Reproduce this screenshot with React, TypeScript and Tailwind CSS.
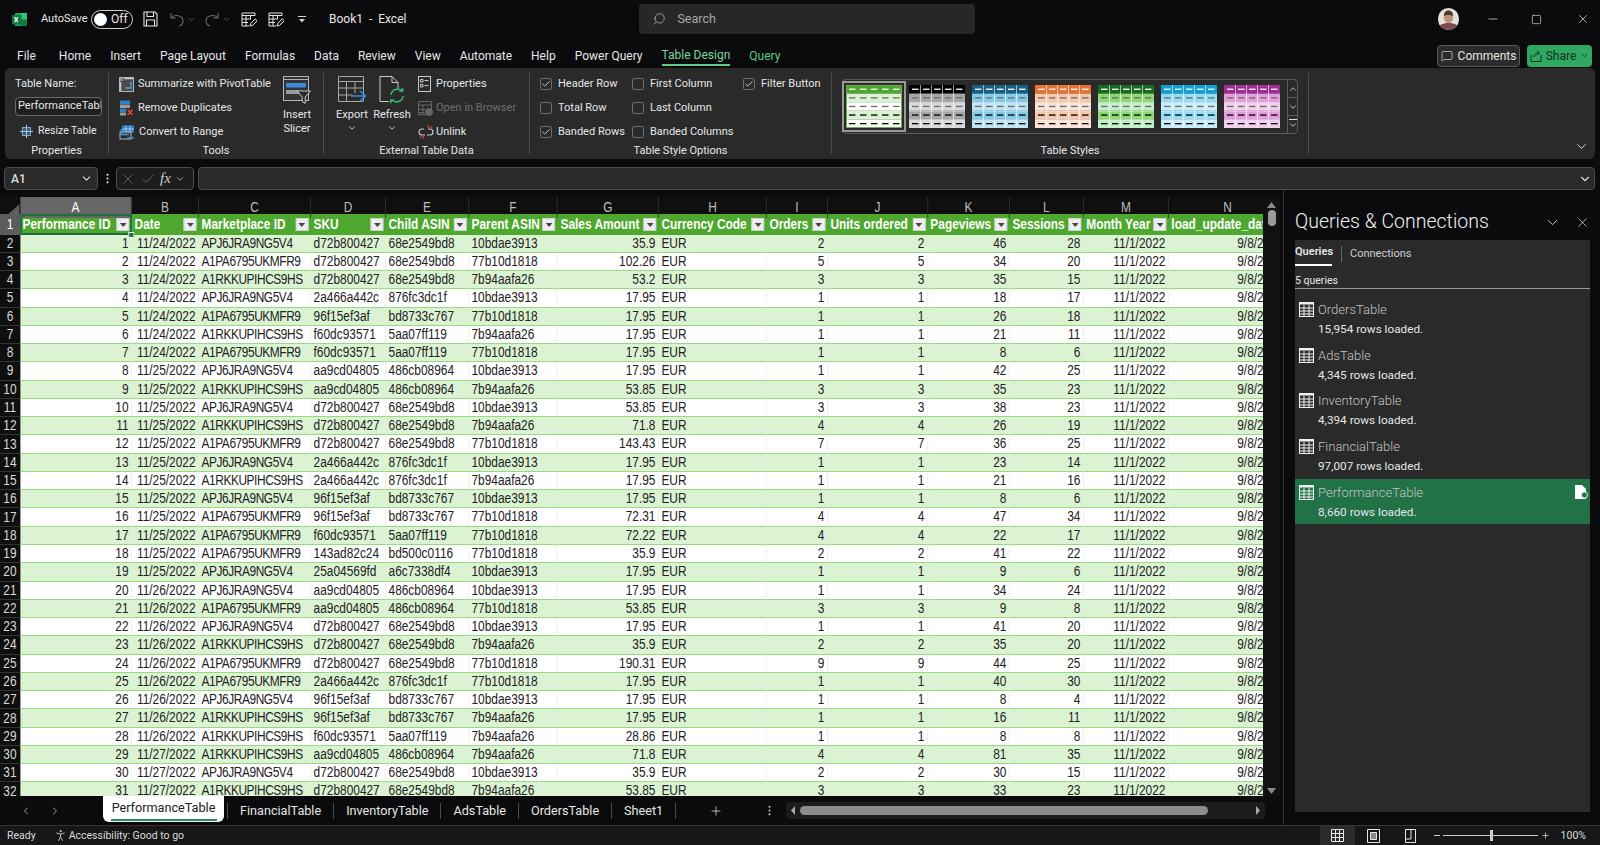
import { ChevronDown, ChevronUp, ChevronLeft, ChevronRight, Check, Search, X, Minus, Square, Plus, EllipsisVertical, MessageSquare, PersonStanding } from 'lucide-react'

const RAW = `1|11/24/2022|APJ6JRA9NG5V4|d72b800427|68e2549bd8|10bdae3913|35.9|2|46|28
2|11/24/2022|A1PA6795UKMFR9|d72b800427|68e2549bd8|77b10d1818|102.26|5|34|20
3|11/24/2022|A1RKKUPIHCS9HS|d72b800427|68e2549bd8|7b94aafa26|53.2|3|35|15
4|11/24/2022|APJ6JRA9NG5V4|2a466a442c|876fc3dc1f|10bdae3913|17.95|1|18|17
5|11/24/2022|A1PA6795UKMFR9|96f15ef3af|bd8733c767|77b10d1818|17.95|1|26|18
6|11/24/2022|A1RKKUPIHCS9HS|f60dc93571|5aa07ff119|7b94aafa26|17.95|1|21|11
7|11/24/2022|A1PA6795UKMFR9|f60dc93571|5aa07ff119|77b10d1818|17.95|1|8|6
8|11/25/2022|APJ6JRA9NG5V4|aa9cd04805|486cb08964|10bdae3913|17.95|1|42|25
9|11/25/2022|A1RKKUPIHCS9HS|aa9cd04805|486cb08964|7b94aafa26|53.85|3|35|23
10|11/25/2022|APJ6JRA9NG5V4|d72b800427|68e2549bd8|10bdae3913|53.85|3|38|23
11|11/25/2022|A1RKKUPIHCS9HS|d72b800427|68e2549bd8|7b94aafa26|71.8|4|26|19
12|11/25/2022|A1PA6795UKMFR9|d72b800427|68e2549bd8|77b10d1818|143.43|7|36|25
13|11/25/2022|APJ6JRA9NG5V4|2a466a442c|876fc3dc1f|10bdae3913|17.95|1|23|14
14|11/25/2022|A1RKKUPIHCS9HS|2a466a442c|876fc3dc1f|7b94aafa26|17.95|1|21|16
15|11/25/2022|APJ6JRA9NG5V4|96f15ef3af|bd8733c767|10bdae3913|17.95|1|8|6
16|11/25/2022|A1PA6795UKMFR9|96f15ef3af|bd8733c767|77b10d1818|72.31|4|47|34
17|11/25/2022|A1PA6795UKMFR9|f60dc93571|5aa07ff119|77b10d1818|72.22|4|22|17
18|11/25/2022|A1PA6795UKMFR9|143ad82c24|bd500c0116|77b10d1818|35.9|2|41|22
19|11/25/2022|APJ6JRA9NG5V4|25a04569fd|a6c7338df4|10bdae3913|17.95|1|9|6
20|11/26/2022|APJ6JRA9NG5V4|aa9cd04805|486cb08964|10bdae3913|17.95|1|34|24
21|11/26/2022|A1PA6795UKMFR9|aa9cd04805|486cb08964|77b10d1818|53.85|3|9|8
22|11/26/2022|APJ6JRA9NG5V4|d72b800427|68e2549bd8|10bdae3913|17.95|1|41|20
23|11/26/2022|A1RKKUPIHCS9HS|d72b800427|68e2549bd8|7b94aafa26|35.9|2|35|20
24|11/26/2022|A1PA6795UKMFR9|d72b800427|68e2549bd8|77b10d1818|190.31|9|44|25
25|11/26/2022|A1PA6795UKMFR9|2a466a442c|876fc3dc1f|77b10d1818|17.95|1|40|30
26|11/26/2022|APJ6JRA9NG5V4|96f15ef3af|bd8733c767|10bdae3913|17.95|1|8|4
27|11/26/2022|A1RKKUPIHCS9HS|96f15ef3af|bd8733c767|7b94aafa26|17.95|1|16|11
28|11/26/2022|A1RKKUPIHCS9HS|f60dc93571|5aa07ff119|7b94aafa26|28.86|1|8|8
29|11/27/2022|A1RKKUPIHCS9HS|aa9cd04805|486cb08964|7b94aafa26|71.8|4|81|35
30|11/27/2022|APJ6JRA9NG5V4|d72b800427|68e2549bd8|10bdae3913|35.9|2|30|15
31|11/27/2022|A1RKKUPIHCS9HS|d72b800427|68e2549bd8|7b94aafa26|53.85|3|33|23`

const ROWS = RAW.split('\n').map((l) => l.split('|'))

// the sheet font is narrower than anything installed, so the grid is laid out wide and squeezed by 0.85
const COLS = 'grid grid-cols-[23.5px_131.8px_78.8px_131.8px_88.2px_97.6px_104.7px_118.8px_127px_71.8px_117.6px_96.5px_87px_100px_139px]'
const LETTERS = ['A', 'B', 'C', 'D', 'E', 'F', 'G', 'H', 'I', 'J', 'K', 'L', 'M', 'N']
const HEADERS = ['Performance ID', 'Date', 'Marketplace ID', 'SKU', 'Child ASIN', 'Parent ASIN', 'Sales Amount', 'Currency Code', 'Orders', 'Units ordered', 'Pageviews', 'Sessions', 'Month Year', 'load_update_date']
const SHEET_FONT = "[font-family:'Liberation_Sans',sans-serif]"

const TABS = ['Home', 'Insert', 'Page Layout', 'Formulas', 'Data', 'Review', 'View', 'Automate', 'Help', 'Power Query']

const STYLES = [
  { head: '#4ea72e', a: '#d9f2d0', b: '#ffffff', line: false },
  { head: '#000000', a: '#a6a6a6', b: '#d9d9d9', line: true },
  { head: '#156082', a: '#83cbeb', b: '#c1e4f5', line: true },
  { head: '#e97132', a: '#f6c6ad', b: '#fbe3d6', line: true },
  { head: '#196b24', a: '#8ed973', b: '#c1f0c8', line: true },
  { head: '#0f9ed5', a: '#95dcf7', b: '#caedfb', line: true },
  { head: '#a02b93', a: '#e59edc', b: '#f2ceef', line: true },
]

const QUERIES = [
  ['OrdersTable', '15,954 rows loaded.'],
  ['AdsTable', '4,345 rows loaded.'],
  ['InventoryTable', '4,394 rows loaded.'],
  ['FinancialTable', '97,007 rows loaded.'],
  ['PerformanceTable', '8,660 rows loaded.'],
]

function StyleThumb({ s }: { s: (typeof STYLES)[number] }) {
  const fills = [s.head, s.a, s.b, s.a, s.b]
  const dash = ['#ffffff', '#6b6b6b', '#6b6b6b', '#000000', '#000000']
  return (
    <svg width="56" height="43" viewBox="0 0 56 43" className="shrink-0">
      {fills.map((f, r) => (
        <g key={r}>
          <rect x="0" y={r * 8.6} width="56" height="8.6" fill={f} />
          {[0, 1, 2, 3, 4].map((c) => (
            <rect key={c} x={3 + c * 11} y={r * 8.6 + 3.6} width="6.5" height="1.3" fill={dash[r]} />
          ))}
        </g>
      ))}
      {s.line && [11, 22, 33, 44].map((x) => <rect key={x} x={x} y="0" width="0.8" height="43" fill="#ffffff" opacity="0.75" />)}
      {s.line && [17.2, 25.8, 34.4].map((y) => <rect key={y} x="0" y={y} width="56" height="0.7" fill="#ffffff" opacity="0.5" />)}
      {!s.line && <rect x="0.5" y="0.5" width="55" height="42" fill="none" stroke="#6fb04f" />}
    </svg>
  )
}

function ExcelLogo() {
  return (
    <svg width="15" height="15" viewBox="0 0 15 15">
      <rect x="3" y="1" width="12" height="13" rx="1" fill="#21a366" />
      <rect x="9" y="1" width="6" height="6.5" fill="#33c481" />
      <rect x="9" y="7.5" width="6" height="6.5" fill="#107c41" />
      <rect x="0" y="3" width="9.5" height="9.5" rx="1" fill="#107c41" />
      <path d="M2.5 5.2l3.4 5M5.9 5.2l-3.4 5" stroke="#fff" strokeWidth="1.2" />
    </svg>
  )
}

function SaveIcon() {
  return (
    <svg width="15" height="16" viewBox="0 0 15 16" fill="none" stroke="#e6e6e6" strokeWidth="1.1">
      <path d="M1 1h11l2 2v12H1z" />
      <path d="M4 1v4.5h6.5V1M3.5 15V9h8v6" />
    </svg>
  )
}

function EditGridIcon() {
  return (
    <svg width="16" height="15" viewBox="0 0 16 15" fill="none" stroke="#e6e6e6" strokeWidth="1">
      <path d="M1 1h13v2.5H1zM1 3.5V14h7M1 7h9M1 10.5h6M5 3.5V14M9.5 3.5V7" />
      <path d="M9 14l.6-2.6 4.6-4.6 2 2-4.6 4.6z" fill="#1a1a1a" />
    </svg>
  )
}

function PivotIcon() {
  return (
    <svg width="15" height="15" viewBox="0 0 15 15">
      <rect x="0.5" y="0.5" width="14" height="14" fill="#4a4a4a" stroke="#b5b5b5" />
      <rect x="1" y="1" width="3" height="3" fill="#8a8a8a" />
      <path d="M5 1.5h9M1.5 5v9" stroke="#c9c9c9" strokeWidth="1.6" />
      <path d="M12 6v5H7.5" stroke="#3fa0e6" strokeWidth="1.3" fill="none" />
      <path d="M6 11l2-1.6v3.2zM12 4.5l1.6 2h-3.2z" fill="#3fa0e6" />
    </svg>
  )
}

function DuplicatesIcon() {
  return (
    <svg width="15" height="16" viewBox="0 0 15 16">
      <rect x="1" y="0.5" width="10" height="3.5" fill="#2f7fd0" />
      <rect x="1" y="4.5" width="10" height="3.5" fill="#9a9a9a" />
      <rect x="1" y="8.5" width="6" height="3.5" fill="#2f7fd0" />
      <rect x="1" y="12.5" width="6" height="3" fill="#9a9a9a" />
      <path d="M8.5 9.5l5 5.5M13.5 9.5l-5 5.5" stroke="#e2483d" strokeWidth="1.5" />
    </svg>
  )
}

function ConvertIcon() {
  return (
    <svg width="16" height="15" viewBox="0 0 16 15" fill="none">
      <rect x="3" y="0.5" width="12" height="7" fill="#2f7fd0" />
      <path d="M3 4h12M7 0.5v7M11 0.5v7" stroke="#cfe3f6" strokeWidth="0.7" />
      <rect x="1" y="7" width="11" height="7" stroke="#b5b5b5" />
      <path d="M2 4v5.5h8M2 9.5" stroke="#3fa0e6" strokeWidth="1.3" />
      <path d="M8 13h7" stroke="#3fa0e6" strokeWidth="1.3" />
    </svg>
  )
}

function SlicerIcon() {
  return (
    <svg width="28" height="28" viewBox="0 0 28 28" fill="none">
      <rect x="0.5" y="0.5" width="25" height="24" stroke="#b5b5b5" fill="#333" />
      <path d="M0.5 3.5h25" stroke="#b5b5b5" />
      <rect x="3" y="7" width="20" height="4.5" fill="#3a8ddc" />
      <rect x="3" y="14" width="13" height="4" fill="#9a9a9a" />
      <path d="M14 15h13.5l-5.3 6v6.5l-3-2V21z" fill="#2a2a2a" stroke="#c9c9c9" />
    </svg>
  )
}

function ExportIcon() {
  return (
    <svg width="29" height="28" viewBox="0 0 29 28" fill="none" stroke="#a8a8a8">
      <path d="M.5.5h25v25H.5zM.5 5.5h25M.5 12h25M.5 19h14M8.5 5.5v20M17 5.5V17" />
      <path d="M13 20h14M22 15l5.500 5-5.500 5" stroke="#3a8ddc" strokeWidth="1.6" />
    </svg>
  )
}

function RefreshIcon() {
  return (
    <svg width="26" height="28" viewBox="0 0 26 28" fill="none">
      <path d="M1 .5h12l6 6v6M1 .5v25h9M13 .5v6h6" stroke="#c9c9c9" />
      <path d="M12 19a6.500 6.500 0 0 1 11-4M24 20a6.500 6.500 0 0 1-11 4" stroke="#35b36a" strokeWidth="1.6" />
      <path d="M24.500 11v4.800h-4.800zM11 28v-4.800h4.800z" fill="#35b36a" />
    </svg>
  )
}

function PropsIcon() {
  return (
    <svg width="13" height="16" viewBox="0 0 13 16" fill="none" stroke="#c9c9c9">
      <rect x="0.5" y="0.5" width="12" height="15" />
      <path d="M2.500 3.500h2.500v2.500H2.500zM6.500 4.500h4M2.500 8.500h2.500v2.500H2.500zM6.500 9.500h4" />
    </svg>
  )
}

function BrowserIcon() {
  return (
    <svg width="15" height="15" viewBox="0 0 15 15" fill="none" stroke="#666">
      <path d="M.5 .5h13v13H.5zM.5 4h13M.5 8.500h7M.5 11.500h6M5 4v9.500" />
      <circle cx="11" cy="11" r="3.500" fill="#666" />
    </svg>
  )
}

function UnlinkIcon() {
  return (
    <svg width="16" height="16" viewBox="0 0 16 16" fill="none">
      <path d="M6 5H4a3 3 0 0 0 0 6h3M10 5h2a3 3 0 0 1 0 6H9" stroke="#c9c9c9" strokeWidth="1.200" />
      <path d="M10 1l1 3M14 2l-2 2.500M6 15l-1-3M2 14l2-2.500" stroke="#d8483d" strokeWidth="1.100" />
    </svg>
  )
}

function ResizeIcon() {
  return (
    <svg width="13" height="13" viewBox="0 0 13 13" fill="none">
      <rect x="2.500" y="2.500" width="8" height="8" fill="#3b5a7a" stroke="#7ba7d0" />
      <path d="M6.500 2.500v8M2.500 6.500h8" stroke="#a9c4dd" />
      <path d="M6.500 0v2M6.500 11v2M0 6.500h2M11 6.500h2" stroke="#c9c9c9" />
    </svg>
  )
}

function GridIcon() {
  return (
    <svg width="15" height="15" viewBox="0 0 15 15" fill="none" stroke="#f0f0f0">
      <rect x="0.500" y="0.500" width="14" height="14" />
      <path d="M.5 1.500h14" strokeWidth="2" />
      <path d="M.5 6h14M.5 9h14M.5 12h14M5 3v11M10 3v11" />
    </svg>
  )
}

function Avatar() {
  return (
    <svg width="21" height="22" viewBox="0 0 21 22" className="rounded-full">
      <rect width="21" height="22" fill="#e4e0da" />
      <path d="M0 22c0-5 4-7 10.500-7S21 17 21 22z" fill="#7b4a55" />
      <ellipse cx="10.500" cy="9.500" rx="4.500" ry="5.800" fill="#c08f7a" />
      <path d="M6 8c0-4 2-5.500 4.500-5.500S15 4 15 8c-2-1.500-7-1.500-9 0z" fill="#4a3a33" />
    </svg>
  )
}

function FilterButton() {
  return (
    <span className="w-[15px] h-[13px] shrink-0 bg-[#eeeef2] border border-[#cfcfcf] flex items-center justify-center">
      <svg width="8" height="4" viewBox="0 0 8 4"><path d="M0 0h8L4 4z" fill="#444" /></svg>
    </span>
  )
}

function Opt({ label, on }: { label: string; on?: boolean }) {
  return (
    <div className="h-6 flex items-center">
      <span className="w-3 h-3 rounded-[2px] border border-[#6d6d6d] flex items-center justify-center shrink-0">
        {on && <Check size={10} strokeWidth={2} className="text-[#e6e6e6]" />}
      </span>
      <span className="ml-[6px] whitespace-nowrap">{label}</span>
    </div>
  )
}

function Sep() {
  return <div className="w-px h-[81px] self-center bg-[#4d4d4d] shrink-0" />
}

export default function App() {
  return (
    <div className="w-[1600px] h-[845px] overflow-hidden flex flex-col bg-[#0b0b0d] text-[#e6e6e6] text-[12px] [font-family:'Roboto','Liberation_Sans',sans-serif]">
      {/* title bar */}
      <div className="h-[38px] flex items-center shrink-0">
        <div className="ml-3"><ExcelLogo /></div>
        <span className="ml-[14px] text-[11px] w-[44px] whitespace-nowrap">AutoSave</span>
        <div className="ml-[6px] w-[42px] h-[19px] rounded-full border border-[#cfcfcf] flex items-center pl-[2px]">
          <span className="w-[13px] h-[13px] rounded-full bg-white" />
          <span className="ml-[4px] text-[12px]">Off</span>
        </div>
        <div className="ml-[10px]"><SaveIcon /></div>
        <div className="ml-[12px] flex items-center text-[#6b6b6b]">
          <svg width="14" height="15" viewBox="0 0 14 15" fill="none" stroke="#6b6b6b" strokeWidth="1.100"><path d="M1 1v5h5M1 6c3-4 12-3 12 3 0 2.500-2 4.500-4 5" /></svg>
          <ChevronDown size={9} className="ml-[3px]" />
          <svg width="14" height="15" viewBox="0 0 14 15" fill="none" stroke="#6b6b6b" strokeWidth="1.100" className="ml-[9px]"><path d="M13 1v5H8M13 6C10 2 1 3 1 9c0 2.500 2 4.500 4 5" /></svg>
          <ChevronDown size={9} className="ml-[3px]" />
        </div>
        <div className="ml-[10px]"><EditGridIcon /></div>
        <div className="ml-[11px]"><EditGridIcon /></div>
        <svg width="8" height="7" viewBox="0 0 8 7" className="ml-[14px]"><path d="M0 0h8v1H0zM1 3h6L4 6.500z" fill="#d0d0d0" /></svg>
        <span className="ml-[23px] whitespace-pre">Book1  -  Excel</span>
        <div className="ml-[233px] w-[336px] h-[30px] rounded bg-[#272727] flex items-center pl-[13px] text-[#a8a8a8] text-[12.5px]">
          <Search size={14} strokeWidth={1.500} className="-scale-x-100" />
          <span className="ml-[11px]">Search</span>
        </div>
        <div className="ml-[463px]"><Avatar /></div>
        <Minus size={14} strokeWidth={1.200} className="ml-[27px]" />
        <Square size={11} strokeWidth={1.400} className="ml-[31px]" />
        <X size={14} strokeWidth={1.200} className="ml-[34px]" />
      </div>

      {/* ribbon tabs */}
      <div className="h-[30px] flex items-center shrink-0 pt-[5px] pl-[17px] gap-[19px] text-[12px]">
        <span className="mr-[4px]">File</span>
        {TABS.map((t) => <span key={t}>{t}</span>)}
        <span className="h-[20px] flex items-center border-b-2 border-[#5fc98a] text-[#78d59c]">Table Design</span>
        <span className="text-[#5fc98a]">Query</span>
        <div className="ml-auto flex items-center gap-[7px] mr-2">
          <div className="w-[83px] h-[22px] rounded border border-[#5a5a5a] bg-[#2b2b2b] flex items-center justify-center gap-[5px]">
            <MessageSquare size={12} strokeWidth={1.300} />
            <span>Comments</span>
          </div>
          <div className="w-[65px] h-[22px] rounded bg-[#2fa862] text-[#10301f] flex items-center justify-center gap-1">
            <svg width="12" height="12" viewBox="0 0 12 12" fill="none" stroke="#10301f"><path d="M1 5v6.500h10V5M4 7c0-2.500 2-4 5-4M7 .5L9.500 3 7 5.500" /></svg>
            <span>Share</span>
            <ChevronDown size={9} />
          </div>
        </div>
      </div>

      {/* ribbon */}
      <div className="mx-[5px] h-[91px] shrink-0 rounded-md bg-[#2a2a2b] flex text-[11px]">
        <div className="w-[103px] shrink-0 flex flex-col">
          <div className="h-[75px] pt-[4px] pl-[10px]">
            <div className="h-6 flex items-center">Table Name:</div>
            <div className="mt-[1px] h-[19px] w-[87px] rounded border border-[#6a6a6a] bg-[#1f1f1f] flex items-center pl-[2px] overflow-hidden whitespace-nowrap">PerformanceTable</div>
            <div className="mt-[3px] h-6 flex items-center pl-[5px] gap-[5px] text-[10.5px]"><ResizeIcon />Resize Table</div>
          </div>
          <div className="h-4 leading-4 text-center">Properties</div>
        </div>
        <Sep />
        <div className="w-[214px] shrink-0 flex flex-col">
          <div className="h-[75px] pt-[4px] flex">
            <div className="w-[173px] pl-[10px]">
              <div className="h-6 flex items-center gap-1 whitespace-nowrap [&>svg]:shrink-0"><PivotIcon />Summarize with PivotTable</div>
              <div className="h-6 flex items-center gap-1 whitespace-nowrap [&>svg]:shrink-0"><DuplicatesIcon />Remove Duplicates</div>
              <div className="h-6 flex items-center gap-1 whitespace-nowrap [&>svg]:shrink-0"><ConvertIcon />Convert to Range</div>
            </div>
            <div className="w-[30px] flex flex-col items-center pt-[4px]">
              <SlicerIcon />
              <span className="mt-1 leading-[13.5px] text-center">Insert Slicer</span>
            </div>
          </div>
          <div className="h-4 leading-4 text-center">Tools</div>
        </div>
        <Sep />
        <div className="w-[205px] shrink-0 flex flex-col">
          <div className="h-[75px] pt-[4px] flex pl-[12px]">
            <div className="w-[32px] flex flex-col items-center pt-[4px]">
              <ExportIcon />
              <span className="mt-1 leading-[13.5px]">Export</span>
              <ChevronDown size={10} className="mt-[1px]" />
            </div>
            <div className="ml-[4px] w-[40px] flex flex-col items-center pt-[4px]">
              <RefreshIcon />
              <span className="mt-1 leading-[13.5px]">Refresh</span>
              <ChevronDown size={10} className="mt-[1px]" />
            </div>
            <div className="ml-[6px]">
              <div className="h-6 flex items-center gap-[5px] [&>svg]:shrink-0"><PropsIcon />Properties</div>
              <div className="h-6 flex items-center gap-[3px] text-[#6e6e6e] whitespace-nowrap [&>svg]:shrink-0"><BrowserIcon />Open in Browser</div>
              <div className="h-6 flex items-center gap-[2px] [&>svg]:shrink-0"><UnlinkIcon />Unlink</div>
            </div>
          </div>
          <div className="h-4 leading-4 text-center">External Table Data</div>
        </div>
        <Sep />
        <div className="w-[301px] shrink-0 flex flex-col">
          <div className="h-[75px] pt-[4px] pl-[10px] flex">
            <div className="w-[92px]">
              <Opt label="Header Row" on />
              <Opt label="Total Row" />
              <Opt label="Banded Rows" on />
            </div>
            <div className="w-[111px]">
              <Opt label="First Column" />
              <Opt label="Last Column" />
              <Opt label="Banded Columns" />
            </div>
            <div><Opt label="Filter Button" on /></div>
          </div>
          <div className="h-4 leading-4 text-center">Table Style Options</div>
        </div>
        <Sep />
        <div className="w-[476px] shrink-0 flex flex-col">
          <div className="h-[75px] pt-[11px] pl-[10px]">
            <div className="w-[456px] h-[55px] rounded border border-[#5a5a5a] flex items-center pl-[3px] gap-[7px]">
              {STYLES.map((s, i) => (
                <div key={i} className={i === 0 ? 'outline-2 outline-offset-2 outline-[#9a9a9a] flex' : 'flex'}>
                  <StyleThumb s={s} />
                </div>
              ))}
              <div className="ml-auto w-[13px] h-full flex flex-col border-l border-[#5a5a5a] text-[#e0e0e0]">
                <div className="flex-1 flex items-center justify-center border-b border-[#5a5a5a]"><ChevronUp size={10} /></div>
                <div className="flex-1 flex items-center justify-center border-b border-[#5a5a5a]"><ChevronDown size={10} /></div>
                <div className="flex-1 flex flex-col items-center justify-center"><span className="w-2 h-px bg-[#e0e0e0]" /><ChevronDown size={10} /></div>
              </div>
            </div>
          </div>
          <div className="h-4 leading-4 text-center">Table Styles</div>
        </div>
        <Sep />
        <div className="flex-1 flex items-end justify-end pr-[6px] pb-[5px]"><ChevronDown size={15} strokeWidth={1.500} /></div>
      </div>

      {/* formula bar */}
      <div className="mt-2 h-[23px] shrink-0 flex items-center text-[#dcdcdc]">
        <div className="ml-1 w-[94px] h-full rounded border border-[#4d4d4d] bg-[#2a2a2b] flex items-center justify-between pl-[6px] pr-[4px] font-medium">
          A1<ChevronDown size={13} />
        </div>
        <EllipsisVertical size={13} className="ml-[3px]" />
        <div className="ml-[2px] w-[78px] h-full rounded border border-[#4d4d4d] bg-[#1d1d1d] flex items-center pl-[3px] gap-[4px] text-[#777]">
          <X size={16} strokeWidth={1.100} />
          <Check size={16} strokeWidth={1.100} />
          <span className="italic [font-family:'Liberation_Serif',serif] text-[15px] text-[#cfcfcf]">fx</span>
          <ChevronDown size={10} className="text-[#bbb]" />
        </div>
        <div className="ml-1 flex-1 mr-[5px] h-full rounded border border-[#4d4d4d] bg-[#2a2a2b] flex items-center justify-end pr-[2px]">
          <ChevronDown size={14} />
        </div>
      </div>

      {/* sheet area */}
      <div className="flex-1 flex min-h-0">
        <div className="w-[1284px] shrink-0 flex flex-col border-r border-[#333]">
          <div className="mt-[7px] h-[599px] flex">
            <div className="w-[1263px] h-full overflow-hidden bg-white">
              <div className={`w-[1514px] origin-top-left scale-x-[0.85] ${SHEET_FONT}`}>
                <div className={`${COLS} h-[17px] bg-[#0f0f0f] text-[#bdbdbd]`}>
                  <div className="flex items-end justify-end pr-[1px] pb-[1px]">
                    <svg width="17" height="13" viewBox="0 0 17 13"><path d="M17 0v13H0z" fill="#5f5f5f" /></svg>
                  </div>
                  {LETTERS.map((l, i) => (
                    <div key={l} className={`flex items-center justify-center text-[14px] border-r border-[#333] ${i === 0 ? 'bg-[#666] text-white' : ''}`}>{l}</div>
                  ))}
                </div>
                <div className={`${COLS} h-[20.5px] bg-[#4ea72e] text-white font-bold text-[14px]`}>
                  <div className="bg-[#5c5c5c] flex items-center justify-center font-normal">1</div>
                  {HEADERS.map((h, i) => (
                    <div key={h} className={`relative flex items-center justify-between px-[3px] whitespace-nowrap ${i === 0 ? 'outline-2 -outline-offset-2 outline-[#1e6f40]' : ''}`}>
                      <span>{h}</span>
                      {i < 13 && <FilterButton />}
                      {i === 0 && <span className="absolute -right-[3px] -bottom-[3px] w-[7px] h-[6px] bg-[#1e6f40] border border-white" />}
                    </div>
                  ))}
                </div>
                {ROWS.map((r, i) => {
                  const band = i % 2 === 0
                  const cells = [r[0], r[1], r[2], r[3], r[4], r[5], r[6], 'EUR', r[7], r[7], r[8], r[9], '11/1/2022', '9/8/2023']
                  const left = [2, 3, 4, 5, 7]
                  return (
                    <div key={r[0]} className={`${COLS} h-[18.27px] text-[#222] text-[14px] leading-[17px] ${band ? 'bg-[#dcf3d3]' : 'bg-white'}`}>
                      <div className="bg-[#0f0f0f] text-[#d8d8d8] flex items-center justify-center border-b border-[#333]">{i + 2}</div>
                      {cells.map((c, j) => (
                        <div key={j} className={`px-[3px] whitespace-nowrap border-b border-b-[#96dc7d] border-r ${band ? 'border-r-transparent' : 'border-r-[#ececec]'} ${left.includes(j) ? 'text-left' : 'text-right'} ${j === 2 ? 'tracking-[-0.5px]' : ''}`}>{c}</div>
                      ))}
                    </div>
                  )
                })}
              </div>
            </div>
            <div className="w-[17px] h-full flex flex-col items-center bg-[#111] text-[#8a8a8a]">
              <svg width="9" height="6" viewBox="0 0 9 6" className="mt-[5px]"><path d="M4.500 0L9 6H0z" fill="#8a8a8a" /></svg>
              <span className="mt-[2px] w-2 h-[16px] rounded-full bg-[#9a9a9a]" />
              <svg width="9" height="6" viewBox="0 0 9 6" className="mt-auto mb-[2px]"><path d="M4.500 6L9 0H0z" fill="#8a8a8a" /></svg>
            </div>
          </div>
          {/* sheet tabs */}
          <div className="flex-1 flex items-start text-[12.65px] bg-[#0b0b0d]">
            <div className="w-[103px] h-[29px] flex items-center pl-[20px] gap-[17px] text-[#9a9a9a] shrink-0">
              <ChevronLeft size={12} />
              <ChevronRight size={12} />
            </div>
            <div className="w-[121px] h-[26px] shrink-0 bg-white text-[#222] rounded-b-md flex flex-col items-center pt-[3px] shadow">
              <span>PerformanceTable</span>
              <span className="mt-[1px] w-[106px] h-[2px] bg-[#2e8b57]" />
            </div>
            <div className="flex items-center h-[30px]">
              {['FinancialTable', 'InventoryTable', 'AdsTable', 'OrdersTable', 'Sheet1'].map((t, i) => (
                <div key={t} className={`h-[16px] flex items-center px-3 border-r border-[#4d4d4d] ${i === 0 ? 'ml-[3px] border-l' : ''}`}>{t}</div>
              ))}
            </div>
            <div className="h-[29px] flex items-center ml-[33px]"><Plus size={14} strokeWidth={1.300} /></div>
            <div className="h-[29px] flex items-center ml-[40px]"><EllipsisVertical size={13} className="text-[#bbb]" /></div>
            <div className="ml-[10px] mt-[6px] w-[479px] h-[17px] rounded bg-[#1c1c1c] flex items-center pl-[5px] pr-[5px]">
              <svg width="4" height="9" viewBox="0 0 4 9"><path d="M0 4.500L4 0v9z" fill="#aaa" /></svg>
              <span className="ml-[5px] w-[408px] h-[9px] rounded-full bg-[#8c8c8c]" />
              <svg width="4" height="9" viewBox="0 0 4 9" className="ml-auto"><path d="M4 4.500L0 0v9z" fill="#aaa" /></svg>
            </div>
          </div>
        </div>

        {/* queries pane */}
        <div className="flex-1 flex flex-col pl-[11px] pr-[10px]">
          <div className="h-[50px] shrink-0 flex items-center justify-between pt-[14px]">
            <span className="text-[19.5px] font-light text-[#f0f0f0]">Queries &amp; Connections</span>
            <div className="flex items-center gap-[14px] text-[#d0d0d0]">
              <ChevronDown size={17} strokeWidth={1.300} />
              <X size={15} strokeWidth={1.300} />
            </div>
          </div>
          <div className="h-[572px] bg-[#2a2a2b] flex flex-col">
            <div className="h-[26px] shrink-0 flex items-end text-[11px]">
              <span className="w-[37px] pb-[2px] border-b-2 border-white font-semibold h-[24px] flex items-center">Queries</span>
              <span className="ml-[9px] w-px h-4 self-center mt-[2px] bg-[#666]" />
              <span className="ml-[8px] h-[24px] flex items-center text-[#d0d0d0]">Connections</span>
            </div>
            <div className="h-[23px] shrink-0 flex items-center text-[10.5px] border-b border-[#9a9a9a] pt-[7px]">5 queries</div>
            <div className="mt-[7px]">
              {QUERIES.map(([name, sub], i) => (
                <div key={name} className={`h-[45.7px] pl-[4px] pr-[2px] flex items-start pt-[5px] ${i === 4 ? 'bg-[#227248]' : ''}`}>
                  <div className="mt-[1px]"><GridIcon /></div>
                  <div className="ml-[4px] flex-1">
                    <div className="text-[13px] leading-[17px] text-[#c4c4c4] font-light">{name}</div>
                    <div className="mt-[3px] text-[11.75px] leading-[16px] text-[#e6e6e6]">{sub}</div>
                  </div>
                  {i === 4 && (
                    <svg width="13" height="14" viewBox="0 0 13 14" className="mt-[1px]">
                      <path d="M0 0h7l4 4v10H0z" fill="#fff" />
                      <circle cx="9.500" cy="10" r="3" fill="#227248" stroke="#d9efe2" />
                    </svg>
                  )}
                </div>
              ))}
            </div>
          </div>
        </div>
      </div>

      {/* status bar */}
      <div className="h-5 shrink-0 border-t border-[#333] bg-[#171717] flex items-center text-[10.5px] text-[#dcdcdc]">
        <span className="ml-[7px]">Ready</span>
        <PersonStanding size={15} strokeWidth={1.300} className="ml-[17px]" />
        <span className="ml-[1px]">Accessibility: Good to go</span>
        <div className="ml-auto w-[35px] h-full bg-[#2b2b2b] flex items-center justify-center">
          <svg width="13" height="13" viewBox="0 0 13 13" fill="none" stroke="#e6e6e6"><path d="M.5.500h12v12H.5zM.5 4.500h12M.5 8.500h12M4.500.5v12M8.500.5v12" /></svg>
        </div>
        <div className="ml-[12px]">
          <svg width="13" height="14" viewBox="0 0 13 14" fill="none" stroke="#e6e6e6"><path d="M.5.5h12v13H.5z" /><path d="M3.500 3.500h6v7h-6z" fill="#888" /></svg>
        </div>
        <div className="ml-[24px]">
          <svg width="13" height="14" viewBox="0 0 13 14" fill="none" stroke="#e6e6e6"><path d="M1.500.5h10v13h-10zM1.500 10h5.500V.5" /></svg>
        </div>
        <span className="ml-[17px] w-[6px] h-px bg-[#cfcfcf]" />
        <div className="ml-[3px] w-[95px] h-[11px] flex items-center">
          <span className="w-[47px] h-px bg-[#cfcfcf]" />
          <span className="w-[3px] h-[11px] bg-[#cfcfcf]" />
          <span className="flex-1 h-px bg-[#cfcfcf]" />
        </div>
        <Plus size={9} className="ml-[3px]" />
        <span className="ml-[11px] mr-[14px]">100%</span>
      </div>
    </div>
  )
}
